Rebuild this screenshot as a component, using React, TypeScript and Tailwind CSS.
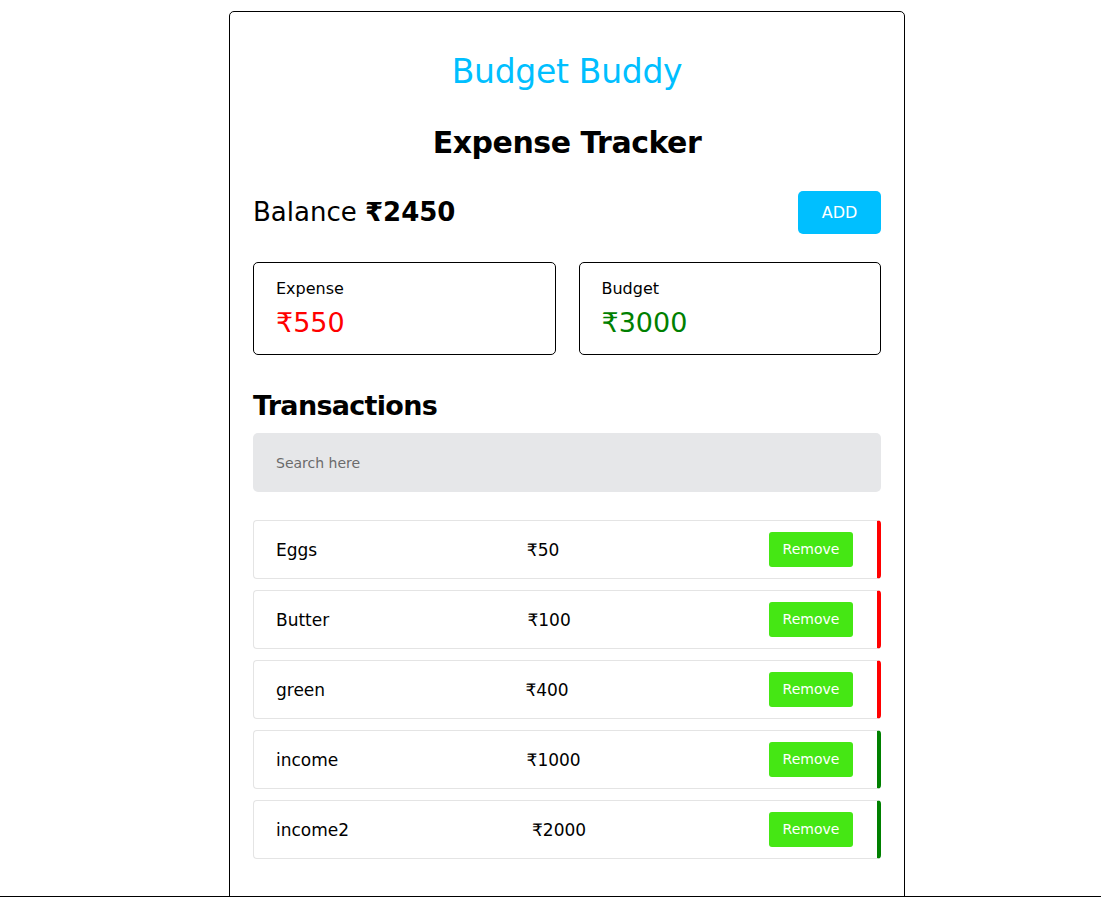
import React from "react";

const transactions = [
  { name: "Eggs", amount: 50, type: "expense" },
  { name: "Butter", amount: 100, type: "expense" },
  { name: "green", amount: 400, type: "expense" },
  { name: "income", amount: 1000, type: "income" },
  { name: "income2", amount: 2000, type: "income" },
];

const App = () => {
  return (
    <div className="h-[897px] overflow-hidden border-b border-black bg-white pl-[33px] font-['DejaVu_Sans',sans-serif] text-black">
      <div className="mx-auto mt-[11px] w-[676px] rounded-[5px] border border-black px-[23px] pt-[36px] pb-[100px]">
        {/* Header */}
        <h1 className="text-center text-[33px] leading-[48px] tracking-[-0.3px] text-[#00bfff]">
          Budget Buddy
        </h1>
        <h2 className="mt-[23px] text-center text-[30px] font-semibold leading-[48px] tracking-[-0.5px]">
          Expense Tracker
        </h2>

        {/* Balance */}
        <div className="mt-[24px] flex items-center justify-between">
          <div className="text-[26px]">
            Balance <span className="font-bold">₹2450</span>
          </div>
          <button className="h-[43px] w-[83px] rounded-[5px] bg-[#00bfff] text-[16px] text-white">
            ADD
          </button>
        </div>

        {/* Summary cards */}
        <div className="mt-[28px] grid grid-cols-2 gap-[23px]">
          <div className="h-[93px] rounded-[5px] border border-black px-[22px] pt-[13px]">
            <div className="text-[16px] leading-[26px]">Expense</div>
            <div className="mt-[3px] text-[27px] leading-[36px] text-[#ff0000]">
              ₹550
            </div>
          </div>
          <div className="h-[93px] rounded-[5px] border border-black px-[22px] pt-[13px]">
            <div className="text-[16px] leading-[26px]">Budget</div>
            <div className="mt-[3px] text-[27px] leading-[36px] text-[#008000]">
              ₹3000
            </div>
          </div>
        </div>

        {/* Transactions */}
        <h3 className="mt-[30px] text-[27px] font-bold leading-[42px] tracking-[-0.7px]">
          Transactions
        </h3>
        <input
          placeholder="Search here"
          className="mt-[6px] h-[59px] w-full rounded-[5px] bg-[#e6e7e9] px-[23px] text-[14px] outline-none placeholder:text-[#6b6b6b]"
        />

        <div className="mt-[28px] flex flex-col gap-[11px]">
          {transactions.map((t) => (
            <div
              key={t.name}
              className={`flex h-[59px] items-center justify-between rounded-[4px] border border-[#e4e4e4] border-r-4 pl-[22px] pr-[24px] ${
                t.type === "expense" ? "border-r-[#ff0000]" : "border-r-[#008000]"
              }`}
            >
              <span className="text-[17px] leading-[26px]">{t.name}</span>
              <span className="text-[17px] leading-[26px]">₹{t.amount}</span>
              <button className="h-[35px] w-[84px] rounded-[3px] bg-[#45e714] text-[14px] text-white">
                Remove
              </button>
            </div>
          ))}
        </div>
      </div>
    </div>
  );
};

export default App;
